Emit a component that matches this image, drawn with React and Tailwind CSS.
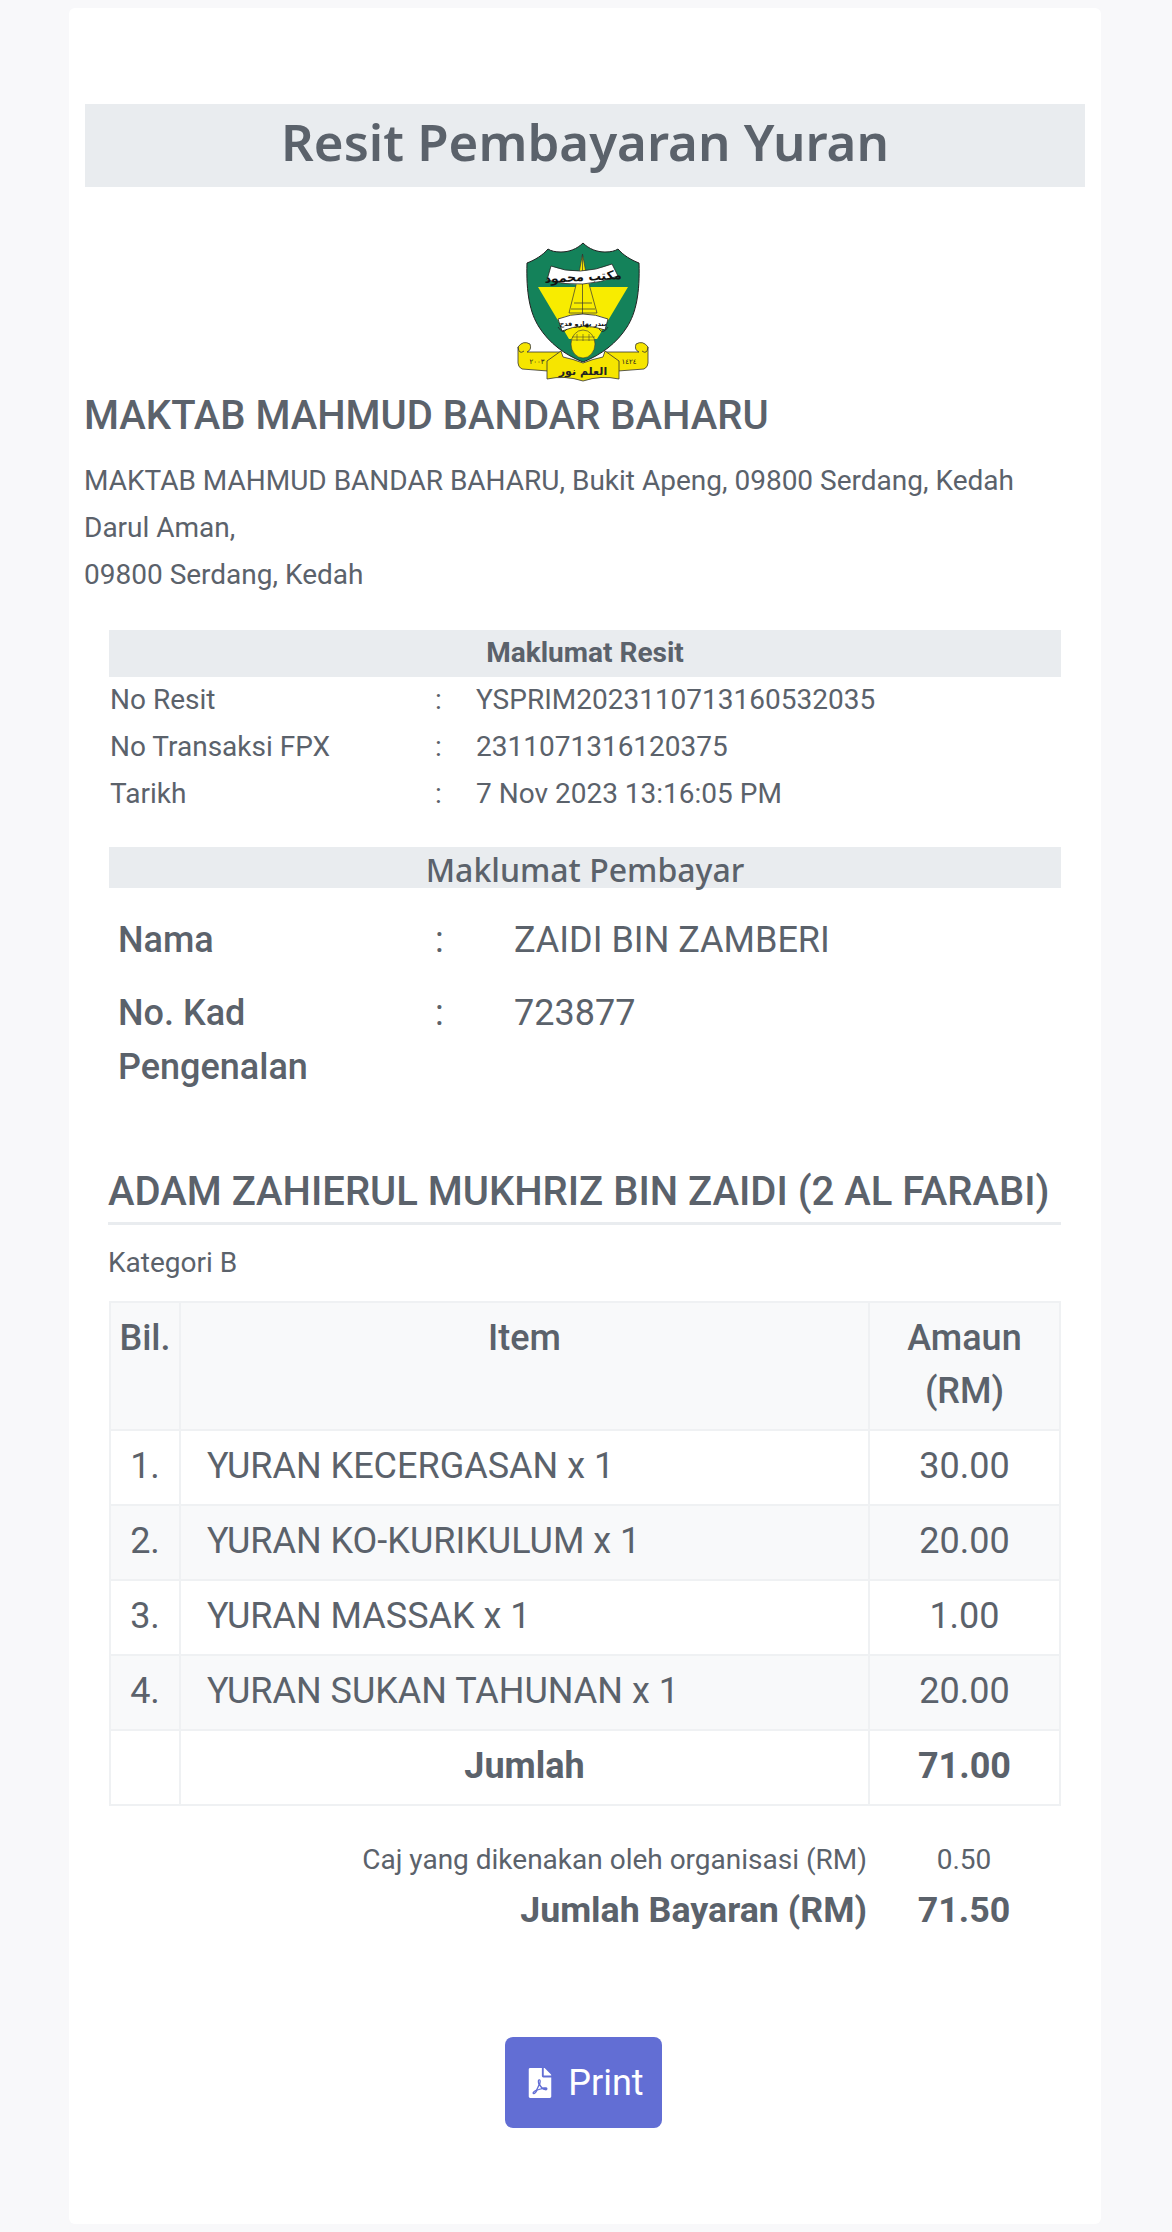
import React from 'react'

const rows = [
  { no: '1.', item: 'YURAN KECERGASAN x 1', amount: '30.00' },
  { no: '2.', item: 'YURAN KO-KURIKULUM x 1', amount: '20.00' },
  { no: '3.', item: 'YURAN MASSAK x 1', amount: '1.00' },
  { no: '4.', item: 'YURAN SUKAN TAHUNAN x 1', amount: '20.00' },
]

const receiptInfo = [
  { label: 'No Resit', value: 'YSPRIM202311071316' + '0532035' },
  { label: 'No Transaksi FPX', value: '2311071316120375' },
  { label: 'Tarikh', value: '7 Nov 2023 13:16:05 PM' },
]

const SchoolLogo = () => (
  <svg width="136" height="138" viewBox="0 0 136 138" className="block overflow-visible">
    {/* side ribbons */}
    <path d="M1 104 Q6 97 13 101 Q15 107 10 109 L44 109 V129 L5 126 Q1 124 1 120 Z" fill="#f6e500" stroke="#333" strokeWidth="0.8" />
    <path d="M131 104 Q126 97 119 101 Q117 107 122 109 L88 109 V129 L127 126 Q131 124 131 120 Z" fill="#f6e500" stroke="#333" strokeWidth="0.8" />
    <path d="M1 104 Q2 112 7 108 M131 104 Q130 112 125 108" fill="none" stroke="#333" strokeWidth="0.8" />
    <text x="20" y="121" textAnchor="middle" fontSize="7" fill="#222" fontFamily="'DejaVu Sans', sans-serif" letterSpacing="2">٢٠٠٣</text>
    <text x="112" y="121" textAnchor="middle" fontSize="7" fill="#222" fontFamily="'DejaVu Sans', sans-serif" letterSpacing="2">١٤٢٤</text>
    {/* shield */}
    <path d="M66 0 C60 6 52 9 44 9 C38 9 34 8 31 6 C26 12 18 17 10 20 C9 50 13 70 22 84 C32 100 48 112 66 119 C84 112 100 100 110 84 C119 70 123 50 122 20 C114 17 106 12 101 6 C98 8 94 9 88 9 C80 9 72 6 66 0 Z" fill="#14825a" stroke="#222" strokeWidth="1" />
    {/* yellow triangle and tower */}
    <path d="M21 44 H111 L80 96 H52 Z" fill="#f8ec00" />
    <ellipse cx="66" cy="101" rx="12" ry="14" fill="#f8ec00" stroke="#333" strokeWidth="0.6" />
    <path d="M65.5 11 L69 30 L80 70 H52 L62 30 Z" fill="#f8ec00" stroke="#333" strokeWidth="0.7" />
    <path d="M65.5 11 V72 M57 60 H75 M54 66 H78" fill="none" stroke="#333" strokeWidth="0.7" />
    <path d="M55 94 H78 M55 97 H78 M60 91 V98 M66 91 V98 M72 91 V98" fill="none" stroke="#333" strokeWidth="0.5" />
    {/* top banner */}
    <path d="M34 23 Q62 34 95 21 L101 33 Q66 47 30 37 Z" fill="#fff" stroke="#222" strokeWidth="0.8" />
    <text x="66" y="38" textAnchor="middle" fontSize="12.5" fontWeight="700" fill="#111" fontFamily="'DejaVu Sans', sans-serif" transform="rotate(-3 66 34)">مكتب محمود</text>
    {/* middle banner */}
    <path d="M41 76 Q66 66 91 76 L88 87 Q66 79 45 88 Z" fill="#fff" stroke="#222" strokeWidth="0.8" />
    <path d="M41 84 Q46 92 50 86 M91 84 Q86 92 82 86" fill="none" stroke="#222" strokeWidth="0.8" />
    <text x="66" y="83" textAnchor="middle" fontSize="6.5" fontWeight="700" fill="#111" fontFamily="'DejaVu Sans', sans-serif">بندر بهارو قدح</text>
    {/* centre ribbon */}
    <path d="M30 118 L44 108 L46 114 Q56 116 66 120 Q76 116 86 114 L88 108 L102 118 V136 Q84 132 66 138 Q48 132 30 136 Z" fill="#f6e500" stroke="#333" strokeWidth="0.8" />
    <text x="66" y="132" textAnchor="middle" fontSize="11" fontWeight="700" fill="#222" fontFamily="'DejaVu Sans', sans-serif">العلم نور</text>
  </svg>
)

const PdfIcon = () => (
  <svg width="26" height="30" viewBox="0 0 384 512" fill="currentColor" className="block">
    <path d="M181.9 256.1c-5-16-4.9-46.9-2-46.9 8.4 0 7.6 36.9 2 46.9zm-1.7 47.2c-7.7 20.2-17.3 43.3-28.4 62.7 18.3-7 39-17.2 62.9-21.9-12.7-9.6-24.9-23.4-34.5-40.8zM86.1 428.1c0 .8 13.2-5.4 34.9-40.2-6.7 6.3-29.1 24.5-34.9 40.2zM248 160h136v328c0 13.3-10.7 24-24 24H24c-13.3 0-24-10.7-24-24V24C0 10.7 10.7 0 24 0h200v136c0 13.2 10.8 24 24 24zm-8 171.8c-20-12.2-33.3-29-42.7-53.8 4.5-18.5 11.6-46.6 6.2-64.2-4.7-29.4-42.4-26.5-47.8-6.8-5 18.3-.4 44.1 8.1 77-11.6 27.6-28.7 64.6-40.8 85.8-.1 0-.1.1-.2.1-27.1 13.9-73.6 44.5-54.5 68 5.6 6.9 16 10 21.5 10 17.9 0 35.7-18 61.1-61.8 25.8-8.5 54.1-19.1 79-23.2 21.7 11.8 47.1 19.5 64 19.5 29.2 0 31.2-32 19.7-43.4-13.9-13.6-54.3-9.7-73.6-7.2zM377 105L279 7c-4.5-4.5-10.6-7-17-7h-6v128h128v-6.1c0-6.3-2.5-12.4-7-16.9z" />
  </svg>
)

export default function App() {
  return (
    <div className="min-h-[2232px] bg-[#f8f8fa] font-['Roboto',sans-serif] text-[#5b626b]">
      <div className="mx-auto w-[1032px] translate-x-[-1px] pt-2">
        <div className="h-[2216px] rounded-[6px] bg-white px-4 pt-[96px]">
          <h1 className="h-[83px] bg-[#e9ecef] text-center font-['Noto_Sans',sans-serif] text-[51px] font-semibold leading-[74px]">
            Resit Pembayaran Yuran
          </h1>

          <div className="mt-[56px] flex justify-center">
            <SchoolLogo />
          </div>

          <h2 className="mt-[12px] -ml-px text-[40px] font-medium leading-[46px]">MAKTAB MAHMUD BANDAR BAHARU</h2>
          <p className="mt-[18px] -ml-px text-[28px] leading-[47px]">
            MAKTAB MAHMUD BANDAR BAHARU, Bukit Apeng, 09800 Serdang, Kedah Darul Aman,
            <br />
            09800 Serdang, Kedah
          </p>

          <div className="mx-6 mt-[32px]">
            <div className="h-[47px] bg-[#e9ecef] text-center text-[28px] font-bold leading-[45px]">Maklumat Resit</div>
            {receiptInfo.map((info) => (
              <div key={info.label} className="flex h-[47px] items-center pb-[2px] text-[28px] leading-[45px]">
                <span className="w-[326px] pl-[1px]">{info.label}</span>
                <span className="w-[41px]">:</span>
                <span>{info.value}</span>
              </div>
            ))}

            <div className="mt-[29px] h-[41px] bg-[#e9ecef] text-center font-['Noto_Sans',sans-serif] text-[32px] font-medium leading-[46px]">
              Maklumat Pembayar
            </div>
            <div className="mt-[25px] flex text-[36px] leading-[54px]">
              <span className="w-[326px] pl-[9px] font-medium">Nama</span>
              <span className="w-[79px]">:</span>
              <span>ZAIDI BIN ZAMBERI</span>
            </div>
            <div className="mt-[19px] flex text-[36px] leading-[54px]">
              <span className="w-[326px] pl-[9px] pr-16 font-medium">No. Kad Pengenalan</span>
              <span className="w-[79px]">:</span>
              <span>723877</span>
            </div>

            <h3 className="mt-[73px] -ml-px border-b-[3px] border-[#e9ecef] pb-[5px] text-[40px] font-medium leading-[50px]">
              ADAM ZAHIERUL MUKHRIZ BIN ZAIDI (2 AL FARABI)
            </h3>
            <p className="mt-[20px] -ml-px text-[28px] leading-[36px]">Kategori B</p>

            <table className="mt-[20px] w-full table-fixed border-collapse text-[36px] leading-[53px]">
              <thead>
                <tr className="bg-[#f8f9fa]">
                  <th className="h-[128px] w-[70px] border-2 border-[#eff1f3] pt-[9px] align-top font-medium">Bil.</th>
                  <th className="border-2 border-[#eff1f3] pt-[9px] align-top font-medium">Item</th>
                  <th className="w-[191px] border-2 border-[#eff1f3] pt-[9px] align-top font-medium">
                    Amaun
                    <br />
                    (RM)
                  </th>
                </tr>
              </thead>
              <tbody>
                {rows.map((row, i) => (
                  <tr key={row.no} className={i % 2 === 1 ? 'bg-[#f8f9fa]' : 'bg-white'}>
                    <td className="h-[75px] border-2 border-[#eff1f3] p-0 pb-[2px] text-center">{row.no}</td>
                    <td className="border-2 border-[#eff1f3] pb-[2px] pl-[26px]">{row.item}</td>
                    <td className="border-2 border-[#eff1f3] pb-[2px] text-center">{row.amount}</td>
                  </tr>
                ))}
                <tr>
                  <td className="h-[75px] border-2 border-[#eff1f3]"></td>
                  <td className="border-2 border-[#eff1f3] pb-[2px] text-center font-bold">Jumlah</td>
                  <td className="border-2 border-[#eff1f3] pb-[2px] text-center font-bold">71.00</td>
                </tr>
              </tbody>
            </table>

            <div className="mt-[36px] flex text-[28px] leading-[36px]">
              <span className="w-[758px] text-right">Caj yang dikenakan oleh organisasi (RM)</span>
              <span className="flex-1 text-center">0.50</span>
            </div>
            <div className="mt-[7px] flex text-[35.75px] font-bold leading-[50px]">
              <span className="w-[758px] text-right">Jumlah Bayaran (RM)</span>
              <span className="flex-1 text-center">71.50</span>
            </div>
          </div>

          <div className="mt-[102px] flex justify-center pr-[3px]">
            <button className="flex h-[91px] w-[157px] items-center justify-center gap-[15px] rounded-[8px] bg-[#626ed4] pl-[4px] text-[36px] text-white">
              <PdfIcon />
              Print
            </button>
          </div>
        </div>
      </div>
    </div>
  )
}
